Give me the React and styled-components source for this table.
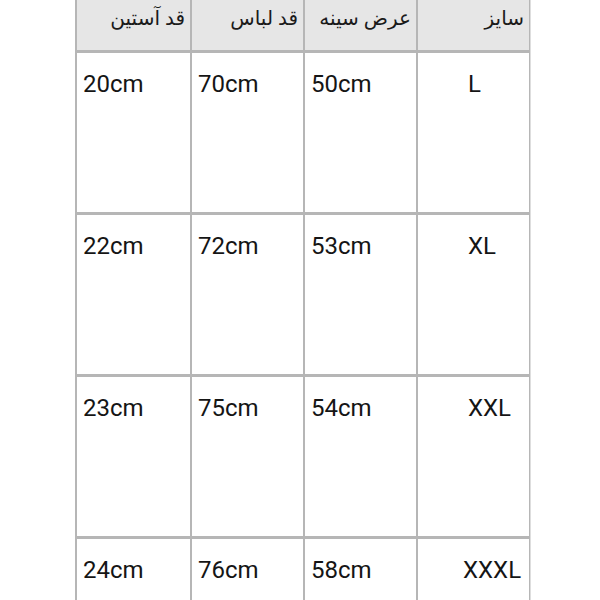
import React from "react";
import styled, { createGlobalStyle } from "styled-components";

const Global = createGlobalStyle`
  html, body { margin: 0; padding: 0; background: #ffffff; }
  body { font-family: Roboto, "DejaVu Sans", sans-serif; }
`;

const Page = styled.div`
  width: 600px;
  height: 600px;
  overflow: hidden;
  background: #ffffff;
  padding-left: 75px;
  box-sizing: border-box;
`;

const Table = styled.div`
  display: grid;
  grid-template-columns: 113px 111px 111px 111px;
  grid-template-rows: 50px repeat(4, 159px);
  column-gap: 2px;
  row-gap: 3px;
  width: 453px;
  padding-left: 2px;
  background: #b6b6b6;
  border-right: 1px solid #dedede;
`;

const HeadCell = styled.div`
  background: #e6e6e6;
  color: #1a1a1a;
  font-family: Roboto, "DejaVu Sans", "Noto Sans", sans-serif;
  font-size: 20px;
  line-height: 26px;
  text-align: right;
  direction: rtl;
  padding: 5px 5px 0 0;
  box-sizing: border-box;
  white-space: nowrap;
`;

const Cell = styled.div`
  background: #ffffff;
  color: #151515;
  font-family: Roboto, "Liberation Sans", sans-serif;
  font-size: 24px;
  line-height: 28px;
  padding: 17px 0 0 ${(p) => p.$indent ?? 6}px;
  box-sizing: border-box;
  white-space: nowrap;
`;

const headers = ["قد آستین", "قد لباس", "عرض سینه", "سایز"];

const rows = [
  { sleeve: "20cm", length: "70cm", chest: "50cm", size: "L", indent: 50 },
  { sleeve: "22cm", length: "72cm", chest: "53cm", size: "XL", indent: 50 },
  { sleeve: "23cm", length: "75cm", chest: "54cm", size: "XXL", indent: 50 },
  { sleeve: "24cm", length: "76cm", chest: "58cm", size: "XXXL", indent: 45 },
];

export default function App() {
  return (
    <>
      <Global />
      <Page>
        <Table>
          {headers.map((h) => (
            <HeadCell key={h}>{h}</HeadCell>
          ))}
          {rows.map((r) => (
            <React.Fragment key={r.size}>
              <Cell>{r.sleeve}</Cell>
              <Cell>{r.length}</Cell>
              <Cell>{r.chest}</Cell>
              <Cell $indent={r.indent}>{r.size}</Cell>
            </React.Fragment>
          ))}
        </Table>
      </Page>
    </>
  );
}
